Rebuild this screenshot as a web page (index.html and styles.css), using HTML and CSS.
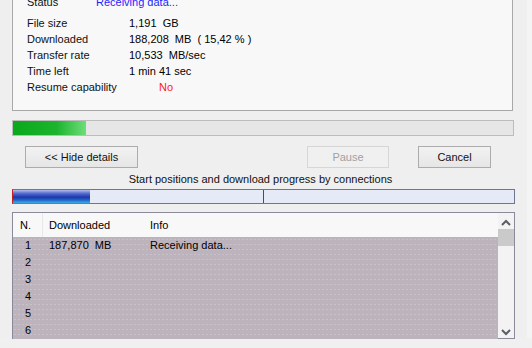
FILE: index.html
```html
<!DOCTYPE html>
<html lang="en">
<head>
    <meta charset="UTF-8">
    <title>Download status</title>
    <link rel="stylesheet" href="styles.css">
</head>
<body>
    <div class="frame">
        <div class="details">
            <div class="row status"><span class="label">Status</span><span class="value blue">Receiving data...</span></div>
            <div class="row"><span class="label">File size</span><span class="value">1,191  GB</span></div>
            <div class="row"><span class="label">Downloaded</span><span class="value">188,208  MB  ( 15,42 % )</span></div>
            <div class="row"><span class="label">Transfer rate</span><span class="value">10,533  MB/sec</span></div>
            <div class="row"><span class="label">Time left</span><span class="value">1 min 41 sec</span></div>
            <div class="row"><span class="label">Resume capability</span><span class="value red">No</span></div>
        </div>

        <div class="progress">
            <div class="progress-fill" style="width: 73px"></div>
        </div>

        <div class="buttons">
            <button class="btn hide-btn">&lt;&lt; Hide details</button>
            <button class="btn pause-btn" disabled>Pause</button>
            <button class="btn cancel-btn">Cancel</button>
        </div>

        <div class="caption">Start positions and download progress by connections</div>

        <div class="connections">
            <div class="conn-fill" style="width: 77px"></div>
            <div class="conn-mark"></div>
        </div>

        <div class="list">
            <div class="list-main">
                <div class="list-head">
                    <div class="col-n">N.</div>
                    <div class="col-dl">Downloaded</div>
                    <div class="col-info">Info</div>
                </div>
                <div class="list-rows">
                    <div class="list-row"><div class="col-n">1</div><div class="col-dl">187,870  MB</div><div class="col-info">Receiving data...</div></div>
                    <div class="list-row"><div class="col-n">2</div></div>
                    <div class="list-row"><div class="col-n">3</div></div>
                    <div class="list-row"><div class="col-n">4</div></div>
                    <div class="list-row"><div class="col-n">5</div></div>
                    <div class="list-row"><div class="col-n">6</div></div>
                </div>
            </div>
            <div class="scrollbar">
                <svg class="arrow" width="16" height="12" viewBox="0 0 16 12"><path d="M4 8 L8 4 L12 8" fill="none" stroke="#5a5f66" stroke-width="2"/></svg>
                <div class="thumb"></div>
                <div class="track"></div>
                <svg class="arrow" width="16" height="12" viewBox="0 0 16 12"><path d="M4 4 L8 8 L12 4" fill="none" stroke="#5a5f66" stroke-width="2"/></svg>
            </div>
        </div>
    </div>
</body>
</html>
```

FILE: styles.css
```css
body {
    margin: 0;
    width: 532px;
    height: 348px;
    overflow: hidden;
    background-color: #f0f0f0;
    font-family: "Liberation Sans", Arial, sans-serif;
    font-size: 11px;
    color: #000;
}

.frame {
    width: 532px;
    height: 348px;
    box-sizing: border-box;
    padding: 0 18px 0 12px;
    border-right: 5px solid #f4f4f4;
    background-color: #efefef;
}

/* details panel, top is cut off by the screenshot */
.details {
    margin-top: -10px;
    width: 501px;
    box-sizing: border-box;
    padding: 3px 0 15px 14px;
    background-color: #f8f8f8;
    border: 1px solid #a8a8a8;
}

.row {
    display: flex;
    line-height: 16px;
    height: 16px;
    white-space: pre;
}

.row.status {
    margin-bottom: 5px;
}

.label {
    width: 102px;
    color: #111;
}

.status .label {
    width: 69px;
}

.blue {
    color: #1e1eff;
}

.red {
    color: #ff1a1a;
    margin-left: 30px;
}

.progress {
    margin-top: 9px;
    width: 502px;
    height: 16px;
    box-sizing: border-box;
    border: 1px solid #bcbcbc;
    background-color: #e6e6e6;
}

.progress-fill {
    height: 100%;
    background: linear-gradient(to right, #0aa81c, #1cb42e 60%, #6ede7a);
}

.buttons {
    display: flex;
    margin-top: 10px;
    padding-left: 13px;
}

.btn {
    height: 22px;
    box-sizing: border-box;
    border: 1px solid #acacac;
    background: linear-gradient(#f2f2f2, #e6e6e6);
    font-family: "Liberation Sans", Arial, sans-serif;
    font-size: 11px;
    color: #111;
    padding: 0;
}

.hide-btn {
    width: 113px;
}

.pause-btn {
    width: 82px;
    margin-left: 169px;
    border-color: #d6d6d6;
    background: #f0f0f0;
    color: #a0a0a0;
}

.cancel-btn {
    width: 73px;
    margin-left: 29px;
}

.caption {
    margin-top: 4px;
    line-height: 14px;
    font-size: 11px;
    text-align: center;
    color: #111;
}

.connections {
    position: relative;
    margin-top: 3px;
    width: 503px;
    height: 15px;
    box-sizing: border-box;
    border: 1px solid #6e7690;
    border-left: 1px solid #c02020;
    background-color: #e6eaf6;
}

.conn-fill {
    height: 100%;
    background: linear-gradient(#b4bcee 0%, #5a6ed2 25%, #1c36aa 55%, #2466c8 78%, #3cb0e8 100%);
}

.conn-mark {
    position: absolute;
    left: 250px;
    top: 0;
    width: 1px;
    height: 100%;
    background-color: #b02030;
}

.list {
    display: flex;
    margin-top: 8px;
    width: 503px;
    height: 127px;
    box-sizing: border-box;
    border: 1px solid #8c8a9a;
    background-color: #f8f8f8;
}

.list-main {
    flex: 1;
    display: flex;
    flex-direction: column;
}

.list-head {
    display: flex;
    height: 24px;
    line-height: 24px;
    background-color: #f8f8f8;
}

.list-head .col-n {
    text-align: left;
    padding-left: 7px;
    border-right: 1px solid #e8e8e8;
}

.list-rows {
    flex: 1;
    background-color: #bdb3bd;
    background-image: radial-gradient(rgba(255, 255, 255, 0.18) 0.5px, transparent 0.7px);
    background-size: 4px 5px;
}

.list-row {
    display: flex;
    height: 17px;
    line-height: 17px;
    white-space: pre;
}

.col-n {
    width: 30px;
    box-sizing: border-box;
    text-align: center;
}

.col-dl {
    width: 100px;
    padding-left: 6px;
}

.col-info {
    padding-left: 1px;
}

.scrollbar {
    width: 16px;
    display: flex;
    flex-direction: column;
    background-color: #f3f3f3;
}

.arrow {
    display: block;
    margin-top: 4px;
}

.thumb {
    height: 17px;
    background-color: #cacaca;
}

.track {
    flex: 1;
}
```
